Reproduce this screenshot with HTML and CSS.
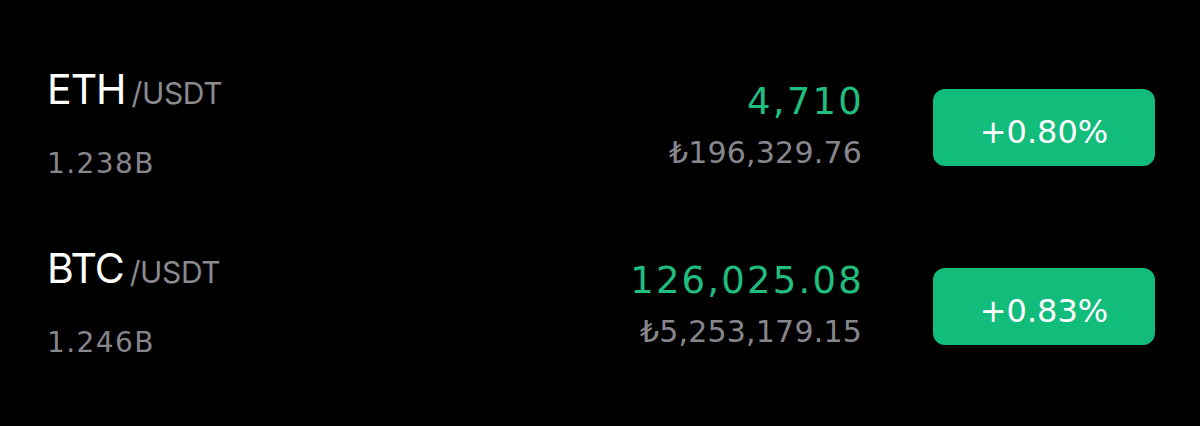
FILE: index.html
```html
<!DOCTYPE html>
<html lang="en">
<head>
<meta charset="utf-8">
<title>Markets</title>
<link rel="stylesheet" href="styles.css">
</head>
<body>
<div class="list">
  <div class="row">
    <div class="pair">
      <div class="symbol"><span class="base">ETH</span><span class="quote">/USDT</span></div>
      <div class="vol">1.238B</div>
    </div>
    <div class="price">
      <div class="last">4,710</div>
      <div class="fiat">₺196,329.76</div>
    </div>
    <div class="change">+0.80%</div>
  </div>
  <div class="row">
    <div class="pair">
      <div class="symbol"><span class="base">BTC</span><span class="quote">/USDT</span></div>
      <div class="vol">1.246B</div>
    </div>
    <div class="price">
      <div class="last">126,025.08</div>
      <div class="fiat">₺5,253,179.15</div>
    </div>
    <div class="change">+0.83%</div>
  </div>
</div>
</body>
</html>
```
FILE: styles.css
```css
html, body {
  margin: 0;
  padding: 0;
  background: #000;
}
body {
  font-family: Inter, "Noto Sans", "DejaVu Sans", sans-serif;
  width: 1200px;
  height: 426px;
  overflow: hidden;
}
.list {
  padding: 38px 45px 0 47px;
}
.row {
  display: flex;
  align-items: flex-start;
  height: 179px;
}
.pair {
  flex: 1;
  margin-top: 27px;
}
.symbol {
  line-height: 48px;
  white-space: nowrap;
}
.base {
  font-size: 41px;
  letter-spacing: -1px;
  color: #fff;
}
.quote {
  font-size: 30px;
  letter-spacing: -0.4px;
  color: #8a8a8f;
  margin-left: 6px;
}
.vol,
.last,
.fiat,
.change {
  font-family: "DejaVu Sans", Inter, sans-serif;
}
.vol {
  margin-top: 24px;
  font-size: 28px;
  line-height: 36px;
  letter-spacing: 1.4px;
  color: #86868c;
}
.price {
  text-align: right;
  margin-top: 42px;
}
.last {
  font-size: 37px;
  line-height: 44px;
  letter-spacing: 2.2px;
  margin-right: -2px;
  color: #1fbd7e;
}
.fiat {
  margin-top: 11px;
  font-size: 30px;
  line-height: 36px;
  letter-spacing: 0.2px;
  color: #86868c;
}
.change {
  margin-top: 51px;
  margin-left: 71px;
  width: 222px;
  height: 77px;
  box-sizing: border-box;
  padding-top: 8px;
  border-radius: 12px;
  background: #12bc7b;
  color: #fff;
  font-size: 32px;
  display: flex;
  align-items: center;
  justify-content: center;
}
```
